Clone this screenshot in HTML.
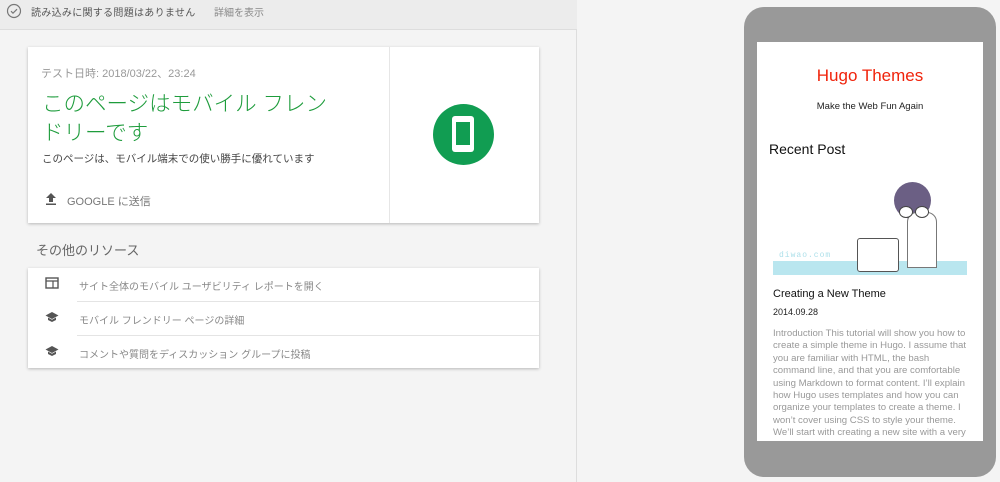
<!DOCTYPE html>
<html><head><meta charset="utf-8"><style>
*{margin:0;padding:0;box-sizing:border-box}
body{width:1000px;height:482px;overflow:hidden;background:#f4f4f4;font-family:"Liberation Sans","Noto Sans CJK JP",sans-serif;position:relative}
.abs{position:absolute}
.left{left:0;top:0;width:577px;height:482px;background:#f4f4f4;border-right:1px solid #ddd}
.bar{left:0;top:0;width:577px;height:30px;background:#ececec;border-bottom:1px solid #ddd}
.card{background:#fff;box-shadow:0 1px 3px rgba(0,0,0,.25)}
.t{white-space:nowrap}
</style></head><body>
<div class="abs left"></div>
<div class="abs bar">
<svg class="abs" style="left:6px;top:3px" width="16" height="16" viewBox="0 0 16 16"><circle cx="8" cy="8" r="6.5" fill="none" stroke="#777" stroke-width="1.2"/><path d="M5 8.2l2 2 4-4" fill="none" stroke="#777" stroke-width="1.2"/></svg>
<div class="abs t" style="left:31px;top:4px;font-size:10px;color:#555;letter-spacing:0.3px">読み込みに関する問題はありません</div>
<div class="abs t" style="left:214px;top:4px;font-size:10px;color:#888">詳細を表示</div>
</div>
<div class="abs card" style="left:28px;top:47px;width:511px;height:176px">
<div class="abs" style="left:361px;top:0;width:1px;height:176px;background:#e6e6e6"></div>
<div class="abs t" style="left:13px;top:18px;font-size:11px;color:#999">テスト日時: 2018/03/22、23:24</div>
<div class="abs" style="left:14px;top:43px;font-size:21.5px;line-height:29px;color:#1e9c3c;width:340px;font-weight:300">このページはモバイル フレン<br>ドリーです</div>
<div class="abs t" style="left:14px;top:104px;font-size:10.5px;color:#444">このページは、モバイル端末での使い勝手に優れています</div>
<svg class="abs" style="left:16px;top:145px" width="14" height="14" viewBox="0 0 14 14"><path d="M7 1L2 6h3v4h4V6h3zM2 11.5h10v1.5H2z" fill="#555"/></svg>
<div class="abs t" style="left:39px;top:146px;font-size:11px;color:#777">GOOGLE に送信</div>
<div class="abs" style="left:405px;top:57px;width:61px;height:61px;border-radius:50%;background:#119d52"></div>
<div class="abs" style="left:424px;top:69px;width:22px;height:36px;border-radius:3px;background:#fff"></div>
<div class="abs" style="left:428px;top:75px;width:14px;height:23px;background:#119d52"></div>
</div>
<div class="abs t" style="left:36px;top:240px;font-size:13px;color:#666">その他のリソース</div>
<div class="abs card" style="left:28px;top:268px;width:511px;height:100px">
<div class="abs" style="left:49px;top:33px;width:462px;height:1px;background:#e4e4e4"></div>
<div class="abs" style="left:49px;top:67px;width:462px;height:1px;background:#e4e4e4"></div>
<svg class="abs" style="left:17px;top:9px" width="14" height="12" viewBox="0 0 14 12"><rect x="1" y="1" width="12" height="10" fill="none" stroke="#555" stroke-width="1.4"/><path d="M1 4h12M8 4v7" stroke="#555" stroke-width="1.2"/></svg>
<svg class="abs" style="left:17px;top:43px" width="14" height="12" viewBox="0 0 14 12"><path d="M7 1L0.5 4.5 7 8l6.5-3.5zM3 6.5v2.5L7 11l4-2V6.5L7 8.7z" fill="#555"/></svg>
<svg class="abs" style="left:17px;top:77px" width="14" height="12" viewBox="0 0 14 12"><path d="M7 1L0.5 4.5 7 8l6.5-3.5zM3 6.5v2.5L7 11l4-2V6.5L7 8.7z" fill="#555"/></svg>
<div class="abs t" style="left:51px;top:10px;font-size:10px;color:#888">サイト全体のモバイル ユーザビリティ レポートを開く</div>
<div class="abs t" style="left:51px;top:44px;font-size:10px;color:#888">モバイル フレンドリー ページの詳細</div>
<div class="abs t" style="left:51px;top:78px;font-size:10px;color:#888">コメントや質問をディスカッション グループに投稿</div>
</div>
<div class="abs" style="left:744px;top:7px;width:252px;height:470px;border-radius:20px;background:#999"></div>
<div class="abs" style="left:757px;top:42px;width:226px;height:399px;background:#fff;overflow:hidden">
<div class="abs t" style="left:0;width:226px;text-align:center;top:24px;font-size:17px;color:#f0230b">Hugo Themes</div>
<div class="abs t" style="left:0;width:226px;text-align:center;top:59px;font-size:9.5px;color:#222">Make the Web Fun Again</div>
<div class="abs t" style="left:12px;top:99px;font-size:14px;color:#111">Recent Post</div>
<div class="abs" style="left:16px;top:219px;width:194px;height:14px;background:#b9e6ef"></div>
<div class="abs t" style="left:22px;top:209px;font-size:8px;color:#aee0ea;font-family:'Liberation Mono',monospace;letter-spacing:1px">diwao.com</div>
<div class="abs" style="left:137px;top:140px;width:37px;height:37px;border-radius:50%;background:#6b5f84"></div>
<div class="abs" style="left:150px;top:170px;width:30px;height:56px;border:1px solid #777;border-radius:10px 10px 0 0;background:#fff"></div>
<div class="abs" style="left:142px;top:164px;width:14px;height:12px;border:1.5px solid #444;border-radius:50%;background:#fff"></div>
<div class="abs" style="left:158px;top:164px;width:14px;height:12px;border:1.5px solid #444;border-radius:50%;background:#fff"></div>
<div class="abs" style="left:100px;top:196px;width:42px;height:34px;border:1px solid #555;border-radius:3px;background:#fff"></div>
<div class="abs t" style="left:16px;top:246px;font-size:11px;color:#111">Creating a New Theme</div>
<div class="abs t" style="left:16px;top:265px;font-size:9px;color:#222">2014.09.28</div>
<div class="abs" style="left:16px;top:286px;width:200px;font-size:9.6px;line-height:12.4px;color:#999">Introduction This tutorial will show you how to create a simple theme in Hugo. I assume that you are familiar with HTML, the bash command line, and that you are comfortable using Markdown to format content. I’ll explain how Hugo uses templates and how you can organize your templates to create a theme. I won’t cover using CSS to style your theme. We’ll start with creating a new site with a very basic template....</div>
</div>
</body></html>
